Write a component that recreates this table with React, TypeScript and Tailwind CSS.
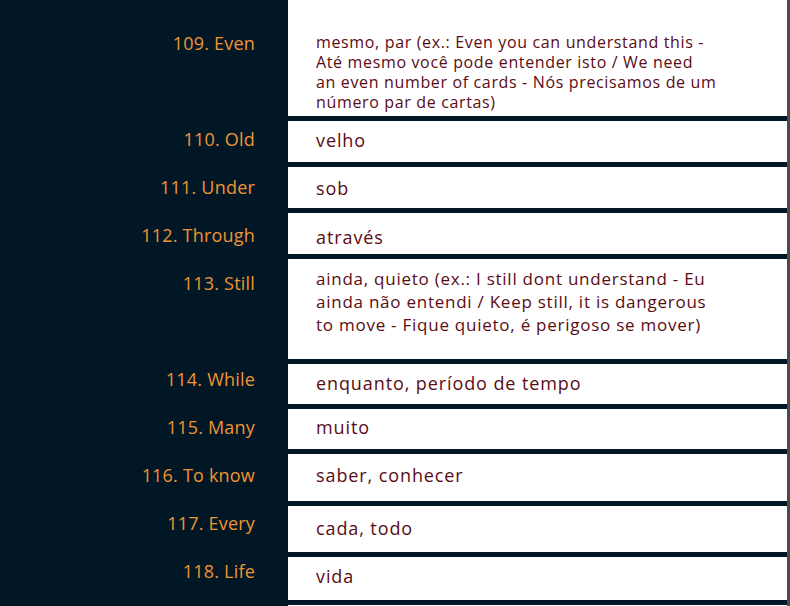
const ROWS = [
  { label: '109. Even', lines: ['mesmo, par (ex.: Even you can understand this -', 'Até mesmo você pode entender isto / We need', 'an even number of cards - Nós precisamos de um', 'número par de cartas)'], h: 'h-[116px]', pt: 'pt-[32px]', small: true },
  { label: '110. Old', lines: ['velho'], h: 'h-[41px]', pt: 'pt-[7px]' },
  { label: '111. Under', lines: ['sob'], h: 'h-[41px]', pt: 'pt-[9px]' },
  { label: '112. Through', lines: ['através'], h: 'h-[41px]', pt: 'pt-[12px]' },
  { label: '113. Still', lines: ['ainda, quieto (ex.: I still dont understand - Eu', 'ainda não entendi / Keep still, it is dangerous', 'to move - Fique quieto, é perigoso se mover)'], h: 'h-[100px]', pt: 'pt-[8px]' },
  { label: '114. While', lines: ['enquanto, período de tempo'], h: 'h-[40px]', pt: 'pt-[7px]' },
  { label: '115. Many', lines: ['muito'], h: 'h-[40px]', pt: 'pt-[6px]' },
  { label: '116. To know', lines: ['saber, conhecer'], h: 'h-[47px]', pt: 'pt-[9px]' },
  { label: '117. Every', lines: ['cada, todo'], h: 'h-[46px]', pt: 'pt-[10px]' },
  { label: '118. Life', lines: ['vida'], h: 'h-[43px]', pt: 'pt-[7px]' },
]

// labels sit on a 48px grid, with two empty slots
const LABEL_SLOTS = ['109. Even', '', '110. Old', '111. Under', '112. Through', '113. Still', '', '114. While', '115. Many', '116. To know', '117. Every', '118. Life']

export default function App() {
  return (
    <div className="w-[790px] h-[606px] overflow-hidden bg-[#021726] flex" style={{ fontFamily: '"Open Sans", "Liberation Sans", sans-serif' }}>
      {/* Left: terms */}
      <div className="w-[288px] shrink-0 pt-[19px] pr-[33px] flex flex-col">
        {LABEL_SLOTS.map((label, i) => (
          <div key={i} className="h-[48px] flex items-center justify-end text-[18px] tracking-[0.2px] text-[#ee9433]">
            {label}
          </div>
        ))}
      </div>

      {/* Right: meanings */}
      <div className="w-[499px] shrink-0 flex flex-col gap-[5px]">
        {ROWS.map((row) => (
          <div key={row.label} className={`bg-white shrink-0 ${row.h} ${row.pt} pl-[28px] text-[#5a0b14]`}>
            {row.lines.map((line, i) => (
              <div
                key={i}
                className={
                  row.small
                    ? 'text-[16px] leading-[20px] tracking-[0.65px]'
                    : row.lines.length > 1
                      ? 'text-[17px] leading-[23px] tracking-[0.75px]'
                      : 'text-[18px] leading-[24px] tracking-[0.9px]'
                }
              >
                {line}
              </div>
            ))}
          </div>
        ))}
        <div className="bg-white h-[10px] shrink-0" />
      </div>

      {/* scrollbar edge */}
      <div className="w-[3px] shrink-0 bg-[#4b4b4b]" />
    </div>
  )
}
